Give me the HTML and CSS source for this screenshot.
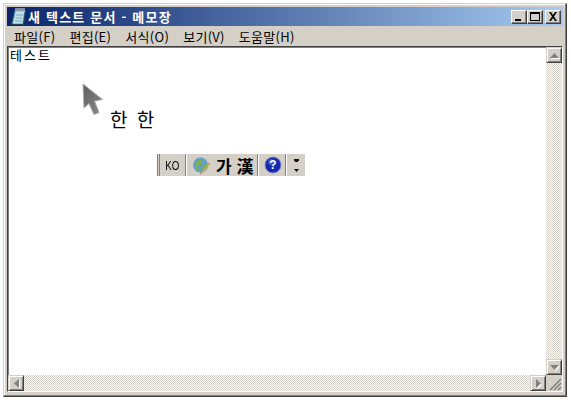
FILE: index.html
```html
<!DOCTYPE html>
<html lang="ko">
<head>
   <meta charset="UTF-8">
   <meta name="viewport" content="width=device-width, initial-scale=1.0">
   <title>새 텍스트 문서 - 메모장</title>
   <link rel="stylesheet" href="styles.css">
</head>
<body>

   <div class="ventana">
       <div class="titulo">
           <svg class="icono-notepad" width="18" height="19" viewBox="0 0 18 19">
               <path d="M5.500 3.500h11l-2 14h-12z" fill="#5f9fbd" stroke="#23425a"/>
               <path d="M6.500 5h8.500l-1.500 11.500H4z" fill="#bfe2ea"/>
               <path d="M7 8h7M6.500 11h7M6 14h7" stroke="#7ba6b8"/>
               <path d="M7 1v4M9 1v4M11 1v4M13 1v4M15 1v4" stroke="#f4f4f4"/>
           </svg>
           <span class="titulo-texto">새 텍스트 문서 - 메모장</span>
           <div class="botones">
               <button class="btn-ventana"><svg width="10" height="9" viewBox="0 0 10 9"><path d="M1 7h6v2H1z"/></svg></button>
               <button class="btn-ventana"><svg width="10" height="9" viewBox="0 0 10 9"><path d="M0 0h10v9H0zM1 2v6h8V2z" fill-rule="evenodd"/></svg></button>
               <button class="btn-ventana btn-cerrar"><svg width="10" height="9" viewBox="0 0 10 9"><path d="M1 0h2l2 3 2-3h2L6 4.500 9 9H7L5 6 3 9H1l3-4.500z"/></svg></button>
           </div>
       </div>

       <div class="menu">
           <span>파일(F)</span>
           <span>편집(E)</span>
           <span>서식(O)</span>
           <span>보기(V)</span>
           <span>도움말(H)</span>
       </div>

       <div class="cliente">
           <div class="editor">
               <div class="contenido">테스트</div>

               <svg class="cursor" width="24" height="34" viewBox="0 0 24 34">
                   <defs>
                       <linearGradient id="grisCursor" x1="0" y1="0" x2="1" y2="1">
                           <stop offset="0" stop-color="#5e5e5e"/>
                           <stop offset="1" stop-color="#8a8a8a"/>
                       </linearGradient>
                   </defs>
                   <path d="M1 1L20.500 16.500l-8 1.500 4.500 11.500-5 2-5-11-5 4.500z" fill="url(#grisCursor)" stroke="#a8a8a8"/>
               </svg>
               <div class="han">한 한</div>

               <div class="ime">
                   <div class="ime-celda ime-ko"><span class="ime-ko-texto">KO</span></div>
                   <div class="ime-celda ime-hanja">
                       <svg width="19" height="19" viewBox="0 0 19 19">
                           <circle cx="8.500" cy="9" r="7.500" fill="#5f9fd6"/>
                           <path d="M3 6l4-3 4 2-2 4-3 1 1 4-2 1-2-4zM11 9l4-1 1 3-4 4-2-3z" fill="#7cae55"/>
                           <path d="M9 16l8-9 1 1-8 9-2 1z" fill="#e8c560" stroke="#8a7a3a" stroke-width="0.500"/>
                       </svg>
                       <span class="ime-letras">가 漢</span>
                   </div>
                   <div class="ime-celda ime-ayuda">
                       <svg width="18" height="18" viewBox="0 0 18 18">
                           <circle cx="9" cy="9" r="8" fill="#1428b0" stroke="#7d86c4"/>
                           <circle cx="7" cy="6" r="3" fill="#6e7ed8" opacity="0.600"/>
                           <text x="9" y="13" class="ime-pregunta" text-anchor="middle">?</text>
                       </svg>
                   </div>
                   <div class="ime-celda ime-mas">
                       <svg width="7" height="15" viewBox="0 0 7 15">
                           <path d="M1 1h5v2H1zM2 3h3v1H2zM1 11h5L3.500 14z" fill="#111"/>
                       </svg>
                   </div>
               </div>
           </div>

           <div class="barra-v">
               <div class="flecha"><svg width="9" height="5" viewBox="0 0 9 5"><path d="M4.500 0L9 5H0z"/></svg></div>
               <div class="pista"></div>
               <div class="flecha"><svg width="9" height="5" viewBox="0 0 9 5"><path d="M0 0h9L4.500 5z"/></svg></div>
           </div>
           <div class="barra-h">
               <div class="flecha"><svg width="5" height="9" viewBox="0 0 5 9"><path d="M5 0v9L0 4.500z"/></svg></div>
               <div class="pista"></div>
               <div class="flecha"><svg width="5" height="9" viewBox="0 0 5 9"><path d="M0 0l5 4.500L0 9z"/></svg></div>
           </div>
           <div class="esquina">
               <svg width="13" height="13" viewBox="0 0 13 13">
                   <path d="M12 1L1 12M12 5l-7 7M12 9l-3 3" stroke="#808080" stroke-width="1.500"/>
               </svg>
           </div>
       </div>
   </div>

</body>
</html>
```

FILE: styles.css
```css
body {
    margin: 0;
    background-color: #ffffff;
    font-family: "Noto Sans CJK KR", "DejaVu Sans", sans-serif;
}
.ventana {
    box-sizing: border-box;
    width: 564px;
    height: 394px;
    margin: 3px 0 0 3px;
    padding: 3px 3px 4px;
    display: flex;
    flex-direction: column;
    background-color: #d4d0c8;
    border: 1px solid #d4d0c8;
    border-right-color: #404040;
    border-bottom-color: #404040;
    box-shadow: inset -1px -1px 0 #808080, inset 1px 1px 0 #ffffff;
}
.titulo {
    height: 19px;
    flex: none;
    display: flex;
    align-items: center;
    padding: 0 2px 0 2px;
    background: linear-gradient(to right, #0a246a, #a6caf0);
    color: #ffffff;
    font-size: 13px;
    font-weight: bold;
}
.icono-notepad {
    flex: none;
    margin-right: 1px;
}
.titulo-texto {
    letter-spacing: 1.2px;
    margin-top: -1px;
}
.botones {
    margin-left: auto;
    display: flex;
}
.btn-ventana {
    box-sizing: border-box;
    width: 16px;
    height: 14px;
    padding: 0;
    display: flex;
    align-items: center;
    justify-content: center;
    background-color: #d4d0c8;
    border: 1px solid;
    border-color: #ffffff #404040 #404040 #ffffff;
    box-shadow: inset -1px -1px 0 #808080;
}
.btn-cerrar {
    margin-left: 2px;
}
.menu {
    height: 20px;
    flex: none;
    display: flex;
    align-items: center;
    gap: 14px;
    padding-left: 7px;
    font-size: 13px;
    letter-spacing: 0.3px;
    color: #000000;
}
.cliente {
    flex: 1;
    min-height: 0;
    display: grid;
    grid-template-columns: 1fr 16px;
    grid-template-rows: 1fr 16px;
    background-color: #ffffff;
    border: 1px solid;
    border-color: #404040 #ffffff #ffffff #404040;
    box-shadow: inset 1px 1px 0 #808080;
}
.editor {
    position: relative;
    padding: 0 1px;
    margin: 1px 0 0 1px;
    font-size: 13px;
    line-height: 13px;
}
.contenido {
    letter-spacing: 2px;
}
.cursor {
    position: absolute;
    left: 73px;
    top: 35px;
}
.han {
    position: absolute;
    left: 101px;
    top: 60px;
    font-size: 19px;
    line-height: 22px;
    word-spacing: 4px;
}
.ime {
    position: absolute;
    left: 148px;
    top: 106px;
    height: 22px;
    display: flex;
    background-color: #d4d0c8;
    border-left: 3px double #808080;
}
.ime-celda {
    display: flex;
    align-items: center;
    justify-content: center;
    border-right: 1px solid #808080;
    box-shadow: 1px 0 0 #ffffff;
    margin-right: 1px;
}
.ime-ko {
    width: 25px;
    font-size: 13px;
    font-family: "Liberation Sans", sans-serif;
}
.ime-ko-texto {
    transform: scaleX(0.75);
}
.ime-hanja {
    width: 71px;
    justify-content: flex-start;
    padding-left: 5px;
    box-sizing: border-box;
    gap: 5px;
}
.ime-letras {
    font-size: 17px;
    font-weight: bold;
    word-spacing: 0;
}
.ime-ayuda {
    width: 27px;
    padding-left: 2px;
    box-sizing: border-box;
}
.ime-pregunta {
    fill: #ffffff;
    font-family: "Liberation Sans", sans-serif;
    font-size: 12px;
    font-weight: bold;
}
.ime-mas {
    width: 18px;
    border-right: none;
    box-shadow: none;
    margin-right: 0;
}
.barra-v, .barra-h {
    display: flex;
    background-image: repeating-conic-gradient(#d4d0c8 0 25%, #ffffff 0 50%);
    background-size: 2px 2px;
}
.barra-v {
    flex-direction: column;
}
.pista {
    flex: 1;
}
.flecha {
    box-sizing: border-box;
    width: 16px;
    height: 16px;
    flex: none;
    display: flex;
    align-items: center;
    justify-content: center;
    background-color: #d4d0c8;
    border: 1px solid;
    border-color: #d4d0c8 #404040 #404040 #d4d0c8;
    box-shadow: inset 1px 1px 0 #ffffff, inset -1px -1px 0 #808080;
    fill: #808080;
}
.flecha svg {
    filter: drop-shadow(1px 1px 0 #ffffff);
}
.esquina {
    display: flex;
    align-items: flex-end;
    justify-content: flex-end;
    background-color: #d4d0c8;
}
```
